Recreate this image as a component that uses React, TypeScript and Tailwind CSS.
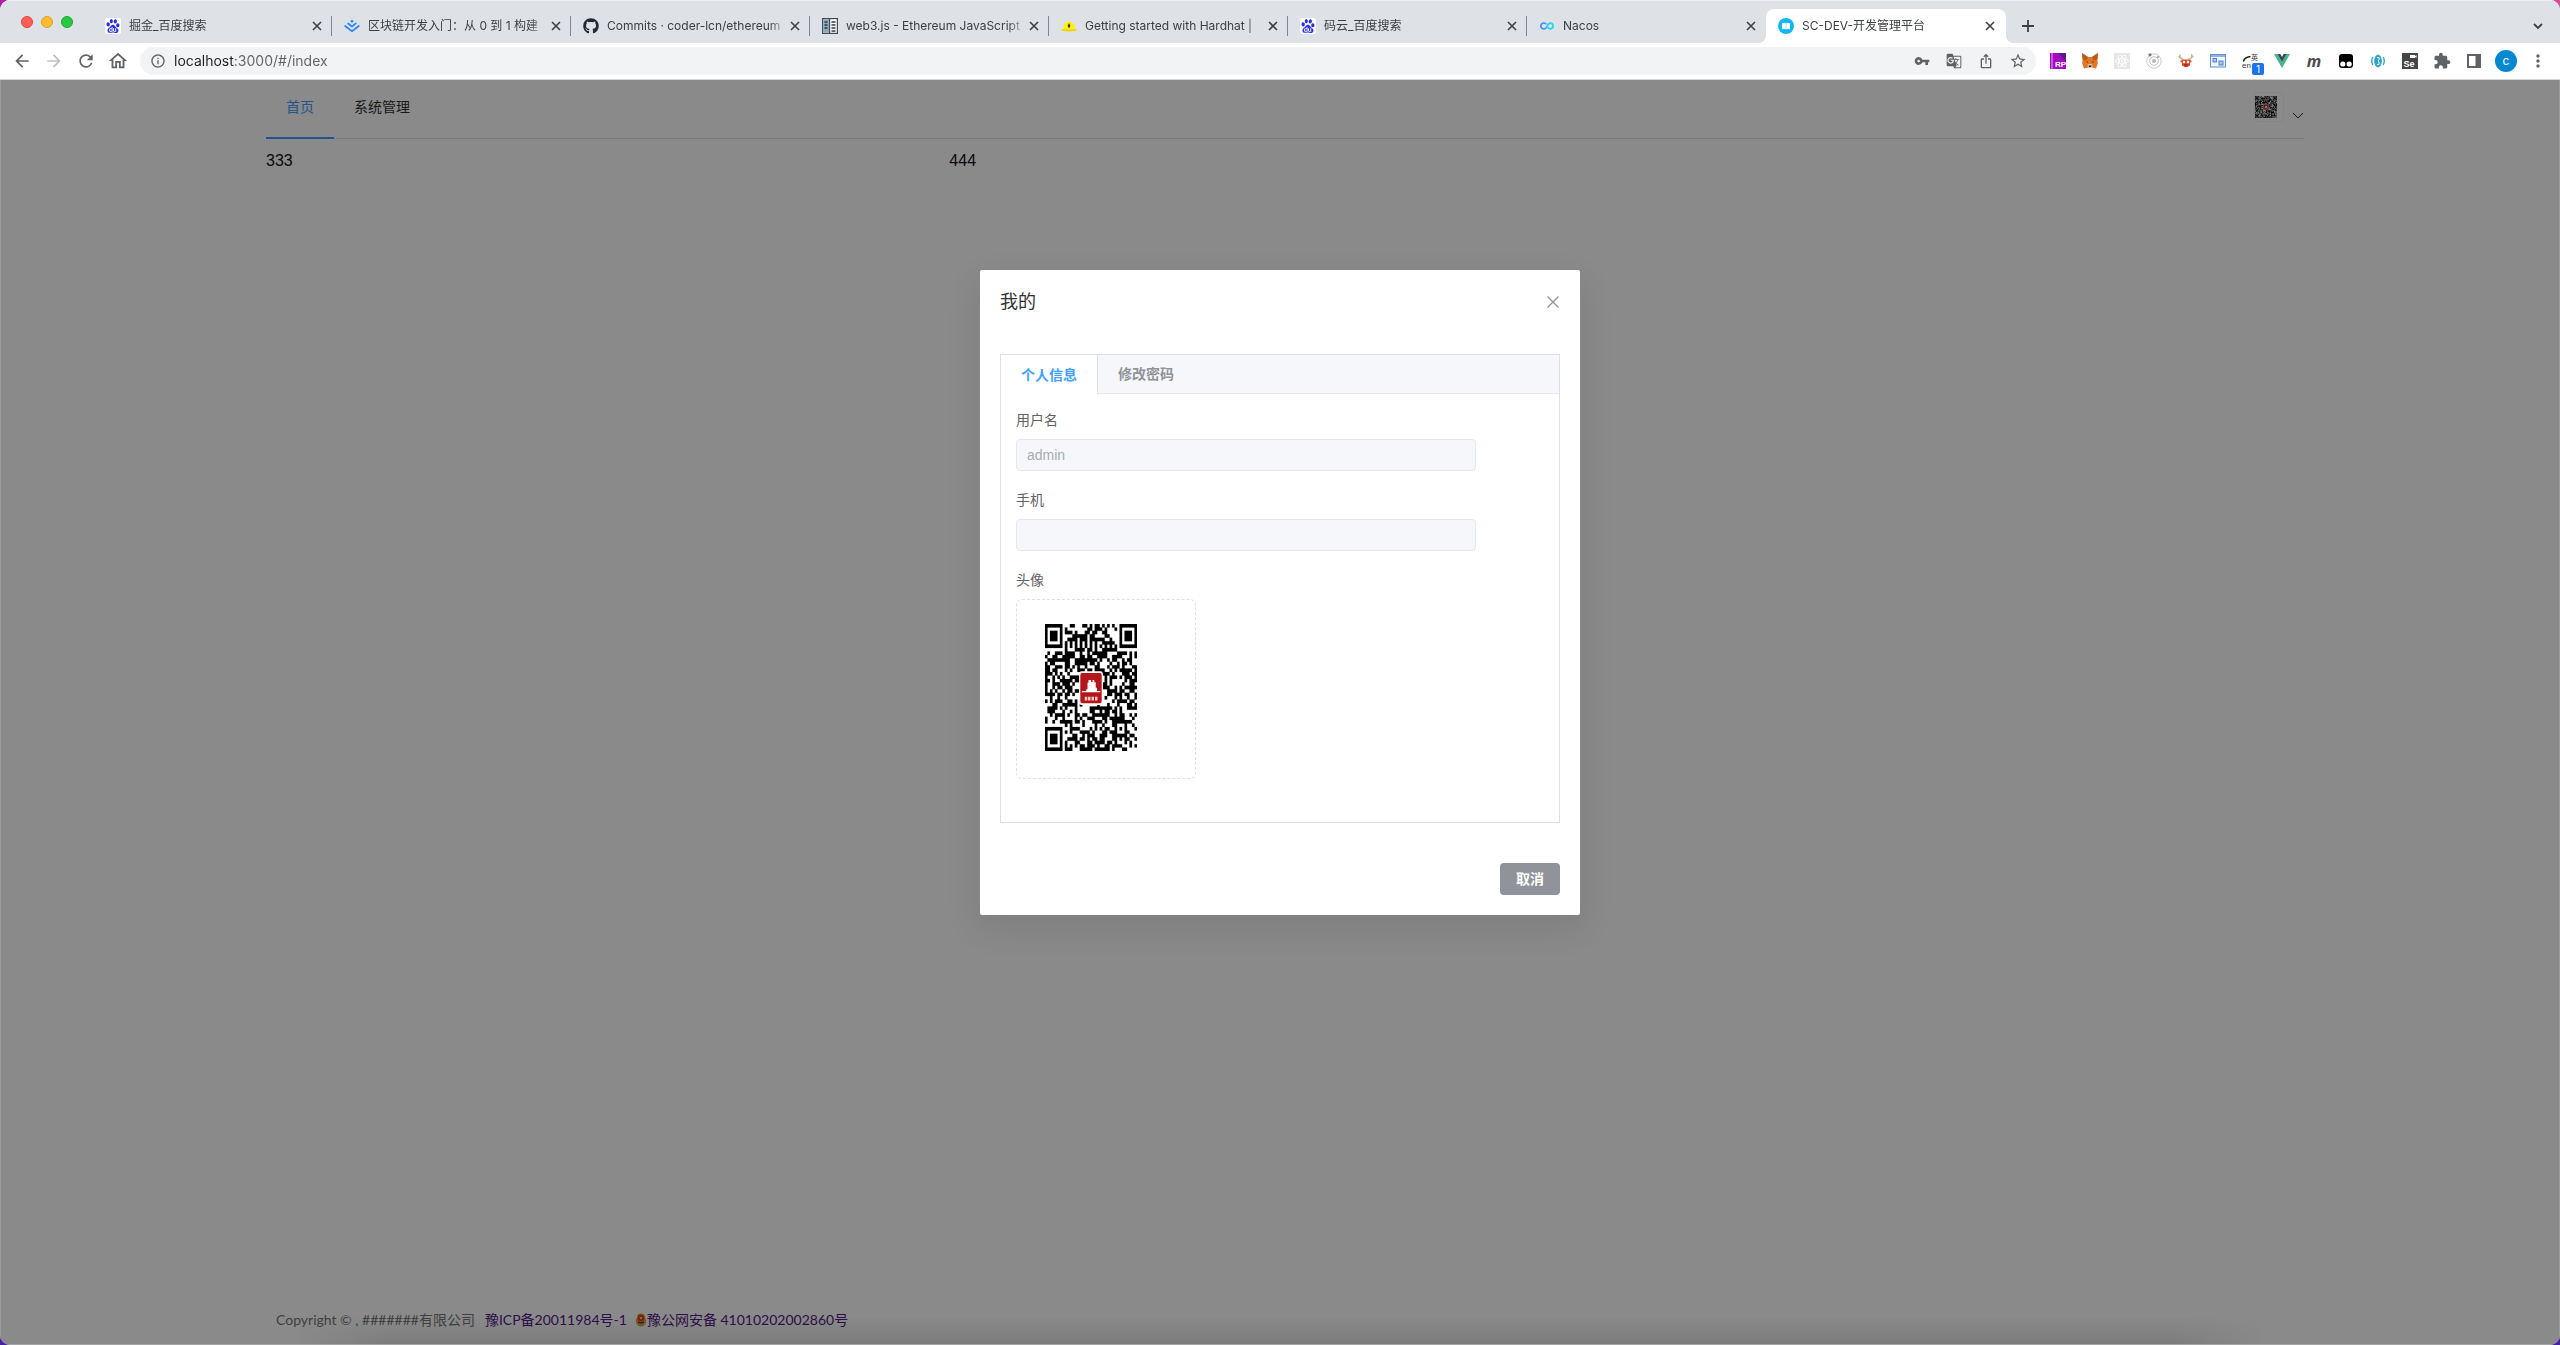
import React from "react";
import { FaGithub } from "react-icons/fa";
import { SiBaidu, SiJuejin } from "react-icons/si";
import {
  MdArrowBack,
  MdArrowForward,
  MdExtension,
  MdGTranslate,
  MdInfoOutline,
  MdIosShare,
  MdMoreVert,
  MdOutlineHome,
  MdRefresh,
  MdStarBorder,
  MdVpnKey,
} from "react-icons/md";

type IconNode = React.ReactNode;

/* ---------- QR avatar ---------- */

const QR_SIZE = 37;

function isFinder(x: number, y: number, ox: number, oy: number, size: number): boolean | null {
  const dx = x - ox;
  const dy = y - oy;
  if (dx < -1 || dy < -1 || dx > size || dy > size) return null;
  const c = (size - 1) / 2;
  const ring = Math.max(Math.abs(dx - c), Math.abs(dy - c));
  if (ring > c) return false;
  return ring === c || ring <= c - 2;
}

function qrPath(): string {
  let seed = 20011984;
  let d = "";
  for (let y = 0; y < QR_SIZE; y++) {
    for (let x = 0; x < QR_SIZE; x++) {
      seed = (seed * 1103515245 + 12345) % 2147483648;
      let on = (seed >> 12) % 100 < 52;
      const eye =
        isFinder(x, y, 0, 0, 7) ?? isFinder(x, y, QR_SIZE - 7, 0, 7) ?? isFinder(x, y, 0, QR_SIZE - 7, 7);
      if (eye !== null) on = eye;
      else if (x >= 28 && x <= 32 && y >= 28 && y <= 32) {
        const r = Math.max(Math.abs(x - 30), Math.abs(y - 30));
        on = r !== 1;
      } else if (x === 6 || y === 6) on = (x + y) % 2 === 0;
      if (on) d += `M${x} ${y}h1v1h-1z`;
    }
  }
  return d;
}

const QR_D = qrPath();

function QrCode({ className }: { className: string }) {
  return (
    <svg className={className} viewBox="0 0 37 37" preserveAspectRatio="none" role="img" aria-label="头像">
      <path d={QR_D} fill="#000" stroke="#000" strokeWidth=".06" />
      <rect x="13.7" y="13.8" width="9.6" height="9.8" rx="1" fill="#fff" />
      <rect x="14.2" y="14.3" width="8.6" height="8.8" rx=".7" fill="#b3171b" />
      <path d="M14.8 19.9h7.4v-.4h-1.3v-.9h-.5v-1.6h-.6v-.7h-.7v.6h-.6v-.6h-1v.8h-.4v1.9h-.5v.5h-1.8z" fill="#fff" />
      <path d="M16 21.2h1v1.1h-1zM17.3 21.2h1v1.1h-1zM18.7 21.2h1v1.1h-1zM20.1 21.2h1v1.1h-1z" fill="#f0c9c9" />
    </svg>
  );
}

/* ---------- small glyphs ---------- */

function Cross({ size = 16, weight = 1.6 }: { size?: number; weight?: number }) {
  return (
    <svg width={size} height={size} viewBox="0 0 16 16" fill="none" stroke="currentColor" strokeWidth={weight}>
      <path d="M4 4l8 8M12 4l-8 8" />
    </svg>
  );
}

function Baidu() {
  return (
    <span className="flex size-4 items-center justify-center rounded-xs bg-white text-[#2a2fe0]">
      <SiBaidu size={14} />
    </span>
  );
}

function Web3Book() {
  return (
    <svg width="16" height="16" viewBox="0 0 16 16">
      <rect x=".6" y=".6" width="14.8" height="14.8" fill="#fff" stroke="#3b4a54" strokeWidth="1.2" />
      <rect x="1.2" y="1.2" width="6" height="13.6" fill="#8fa9b8" />
      <path d="M7.6 0v16" stroke="#3b4a54" strokeWidth="1.2" />
      <path d="M2.5 4h3M2.5 7h3M2.5 10h3M9.5 4h4M9.5 7h4M9.5 10h4M9.5 13h4" stroke="#2b3a44" strokeWidth="1.4" />
    </svg>
  );
}

function Hardhat() {
  return (
    <svg width="16" height="16" viewBox="0 0 16 16">
      <path d="M2 11a6 7.5 0 0 1 12 0z" fill="#fff100" />
      <path d="M.5 11.2h15v1.6q-7.5 1.6-15 0z" fill="#f0d500" />
      <path d="M8 5l1.4 2.7L8 10.4 6.600 7.700z" fill="#333" />
    </svg>
  );
}

function Infinity2() {
  return (
    <svg width="16" height="16" viewBox="0 0 16 16" fill="none" strokeWidth="1.700">
      <path d="M7.200 6.200A3 3 0 1 0 7.200 9.800" stroke="#3f8cff" />
      <path d="M7.200 9.800C8.200 8.500 8.500 5.200 11.500 5.200a2.800 2.800 0 1 1-2.700 4" stroke="#22d3ee" />
    </svg>
  );
}

function SiteBadge() {
  return (
    <svg width="16" height="16" viewBox="0 0 16 16">
      <circle cx="8" cy="8" r="8" fill="#12b5f5" />
      <path d="M4 5.200q2-1 4 0 2-1 4 0v6q-2-.6-4 0-2-.6-4 0z" fill="#fff" />
      <path d="M8 5.200v6" stroke="#8bdcfa" strokeWidth=".7" />
    </svg>
  );
}

/* ---------- extension icons ---------- */

function AxureRp() {
  return (
    <svg width="16" height="16" viewBox="0 0 16 16">
      <rect width="16" height="16" fill="#a30dbf" />
      <path d="M8 0h8v9z" fill="#5a1a8c" />
      <rect x="1.500" width="1" height="16" fill="#f3a6ff" />
      <text x="5" y="14" fontSize="8" fontWeight="700" fill="#fff" fontFamily="Liberation Sans, sans-serif">RP</text>
    </svg>
  );
}

function Fox() {
  return (
    <svg width="16" height="16" viewBox="0 0 16 16">
      <path d="M0 0l6 4h4l6-4-.6 6.500.4 4L14 15.500l-4-1H6l-4 1L.2 10.500l.4-4z" fill="#e27625" />
      <path d="M0 0l6 4-1.500 3.500L.6 6.500zM16 0l-6 4 1.500 3.500 3.900-1z" fill="#b85c1c" />
      <path d="M5.500 12l1-1h3l1 1-.5 2.500H6z" fill="#d7c1b3" />
      <path d="M6.500 12.500h3L9 14H7z" fill="#2a2020" />
      <path d="M4.300 8.200l2 .8-1.500.7zM11.700 8.200l-2 .8 1.500.7z" fill="#233447" />
    </svg>
  );
}

function ReactOff() {
  return (
    <svg width="16" height="16" viewBox="0 0 16 16">
      <rect width="16" height="16" fill="#e6e6e6" />
      <g fill="none" stroke="#fff" strokeWidth=".9">
        <ellipse cx="8" cy="8" rx="6.500" ry="2.500" />
        <ellipse cx="8" cy="8" rx="6.500" ry="2.500" transform="rotate(60 8 8)" />
        <ellipse cx="8" cy="8" rx="6.500" ry="2.500" transform="rotate(120 8 8)" />
      </g>
      <circle cx="8" cy="8" r="1.200" fill="#fff" />
    </svg>
  );
}

function Orbit() {
  return (
    <svg width="16" height="16" viewBox="0 0 16 16" fill="none">
      <circle cx="8" cy="8" r="7.200" stroke="#c9c9c9" />
      <circle cx="8" cy="8" r="4.300" stroke="#bdbdbd" />
      <circle cx="8" cy="8" r="2" fill="#b5b5b5" />
      <circle cx="4" cy="1.800" r="1.600" fill="#777" />
      <circle cx="12" cy="4" r="1" fill="#999" />
    </svg>
  );
}

function Deer() {
  return (
    <svg width="16" height="16" viewBox="0 0 16 16" fill="none">
      <path
        d="M5.500 6.500Q1 5.500 2 1.500M3 5L.5 3.500M10.500 6.500Q15 5 13.500 1M13 5l2.500-2"
        stroke="#c4b48c"
        strokeWidth="1.500"
      />
      <path d="M2 8l3-1.500h6L14 8l-2 2v2.500L9.500 14h-3L4 12.500V10z" fill="#dd4b25" />
      <circle cx="6" cy="9" r="1.200" fill="#fff" />
      <circle cx="10" cy="9" r="1.200" fill="#fff" />
      <path d="M6 12h4" stroke="#7d1f10" />
    </svg>
  );
}

function WindowGears() {
  return (
    <svg width="16" height="16" viewBox="0 0 16 16" fill="none">
      <rect x=".5" y="1.500" width="15" height="12.500" fill="#eef5fd" stroke="#5c8fce" />
      <path d="M1 3h14" stroke="#8db4e4" strokeWidth="2" />
      <rect x="3" y="5.500" width="3.500" height="3.500" fill="#a8c8ee" stroke="#4f83c4" />
      <rect x="9" y="8" width="4" height="4" fill="#a8c8ee" stroke="#4f83c4" />
    </svg>
  );
}

function TranslateExt() {
  return (
    <span className="relative block size-4">
      <svg width="16" height="16" viewBox="0 0 16 16" fill="none">
        <path d="M1.500 8.500Q2 4.500 8.500 3.500" stroke="#111" strokeWidth="1.500" />
        <text x="0" y="15" fontSize="8" fill="#333" fontFamily="Liberation Sans, sans-serif">en</text>
        <text x="9" y="6.500" fontSize="7" fill="#333" fontFamily="Noto Sans CJK SC, sans-serif">英</text>
      </svg>
      <span className="absolute top-2.5 left-2.5 flex h-3 w-3 items-center justify-center rounded-xs bg-[#1a73e8] text-[10px] leading-3 text-white">
        1
      </span>
    </span>
  );
}

function Vue() {
  return (
    <svg width="16" height="16" viewBox="0 0 16 16">
      <path d="M0 1h3.400L8 9l4.600-8H16L8 15z" fill="#41b883" />
      <path d="M3.400 1h3L8 4l1.600-3h3L8 9z" fill="#35495e" />
    </svg>
  );
}

function Tamper() {
  return (
    <svg width="16" height="16" viewBox="0 0 16 16">
      <rect x="1" y="1" width="14" height="14" rx="3" fill="#000" />
      <circle cx="4.800" cy="11" r="2.600" fill="#fff" />
      <circle cx="11.200" cy="11" r="2.600" fill="#fff" />
    </svg>
  );
}

function Braces() {
  return (
    <svg width="16" height="16" viewBox="0 0 16 16" fill="none" stroke="#2fa3c7">
      <ellipse cx="8" cy="8" rx="3.300" ry="6" fill="#2fa3c7" />
      <path d="M2.800 4Q.6 8 2.800 12M13.200 4q2.200 4 0 8" strokeWidth="1.300" />
      <path d="M7 4.500h2v2.500l-1 1 1 1v2.500H7" stroke="#fff" strokeWidth="1" />
    </svg>
  );
}

function Selenium() {
  return (
    <svg width="16" height="16" viewBox="0 0 16 16">
      <rect width="16" height="16" fill="#454545" />
      <path d="M8 2h5v1l1.500-1v3L13 4v1H8z" fill="#fff" />
      <text x="1.500" y="14" fontSize="9" fontWeight="700" fill="#fff" fontFamily="Liberation Sans, sans-serif">Se</text>
    </svg>
  );
}

function SidePanel() {
  return (
    <svg width="16" height="16" viewBox="0 0 16 16">
      <path d="M1 1h14v14H1zM3 3v10h6.500V3z" fill="#5f6368" fillRule="evenodd" />
    </svg>
  );
}

function Police() {
  return (
    <svg width="12" height="14" viewBox="0 0 14 16" aria-hidden="true">
      <path d="M7 .5q5 0 4.500 4.500Q14 8 12.500 12 11 15.500 7 15.500T1.500 12Q0 8 2.500 5 2 .5 7 .5z" fill="#e0a43a" />
      <circle cx="7" cy="5.800" r="3.800" fill="#d93a1c" />
      <path d="M7 3.500l.7 1.300 1.400.2-1 1 .2 1.400L7 6.800l-1.300.6.200-1.400-1-1 1.400-.2z" fill="#f8d24a" />
      <path d="M3.500 9.500q3.500 2 7 0v1.500q-3.500 2-7 0z" fill="#27306b" />
    </svg>
  );
}

/* ---------- browser chrome ---------- */

interface BrowserTab {
  title: string;
  icon: IconNode;
}

const tabs: BrowserTab[] = [
  { title: "掘金_百度搜索", icon: <Baidu /> },
  { title: "区块链开发入门：从 0 到 1 构建", icon: <SiJuejin size={16} color="#1e80ff" /> },
  { title: "Commits · coder-lcn/ethereum", icon: <FaGithub size={16} color="#24292f" /> },
  { title: "web3.js - Ethereum JavaScript", icon: <Web3Book /> },
  { title: "Getting started with Hardhat |", icon: <Hardhat /> },
  { title: "码云_百度搜索", icon: <Baidu /> },
  { title: "Nacos", icon: <Infinity2 /> },
  { title: "SC-DEV-开发管理平台", icon: <SiteBadge /> },
];

function TabStrip() {
  const last = tabs.length - 1;
  return (
    <header className="flex h-[43px] items-end border-t border-[#eceef0] bg-[#dee1e6]">
      <div className="flex h-[42px] w-[93px] shrink-0 items-center gap-2 pl-[21px]">
        <button aria-label="关闭窗口" className="size-3 rounded-full border border-[#e0443e] bg-[#ff5f57]" />
        <button aria-label="最小化" className="size-3 rounded-full border border-[#dea123] bg-[#febc2e]" />
        <button aria-label="全屏" className="size-3 rounded-full border border-[#1aab29] bg-[#28c840]" />
      </div>
      {tabs.map((tab, i) => {
        const active = i === last;
        return (
          <div
            key={i}
            className={
              active
                ? "relative flex h-[34px] max-w-[240px] min-w-0 flex-1 items-center rounded-t-lg bg-white pr-0.5 pl-3"
                : "flex h-[34px] max-w-[239px] min-w-0 flex-1 items-center pl-3"
            }
          >
            {active && (
              <>
                <span className="absolute bottom-0 -left-2 size-2 bg-[radial-gradient(circle_at_top_left,#dee1e6_8px,#fff_8px)]" />
                <span className="absolute -right-2 bottom-0 size-2 bg-[radial-gradient(circle_at_top_right,#dee1e6_8px,#fff_8px)]" />
              </>
            )}
            <span className="flex size-4 shrink-0 items-center justify-center">{tab.icon}</span>
            <span className="ml-2 min-w-0 flex-1 overflow-hidden mask-r-from-90% text-xs whitespace-nowrap text-[#3c4043]">
              {tab.title}
            </span>
            <button aria-label={`关闭 ${tab.title}`} className="mr-1.5 shrink-0 text-[#3c4043]">
              <Cross />
            </button>
            {i < last && <span className={i === last - 1 ? "w-px" : "h-5 w-px bg-[#80868b]"} />}
          </div>
        );
      })}
      <button aria-label="新标签页" className="flex h-[34px] w-11 items-center justify-center text-[#3c4043]">
        <svg width="14" height="14" viewBox="0 0 14 14" stroke="currentColor" strokeWidth="1.800">
          <path d="M7 1v12M1 7h12" />
        </svg>
      </button>
      <button aria-label="搜索标签页" className="ml-auto flex h-[34px] w-11 items-center justify-center text-[#3c4043]">
        <svg width="12" height="12" viewBox="0 0 12 12" fill="none" stroke="currentColor" strokeWidth="1.800">
          <path d="M2 4l4 4 4-4" />
        </svg>
      </button>
    </header>
  );
}

function ToolButton({ label, children }: { label: string; children: IconNode }) {
  return (
    <button aria-label={label} className="flex size-8 shrink-0 items-center justify-center text-[#5f6368]">
      {children}
    </button>
  );
}

const extensions: { label: string; icon: IconNode }[] = [
  { label: "Axure RP", icon: <AxureRp /> },
  { label: "MetaMask", icon: <Fox /> },
  { label: "React", icon: <ReactOff /> },
  { label: "Orbit", icon: <Orbit /> },
  { label: "Deer", icon: <Deer /> },
  { label: "窗口", icon: <WindowGears /> },
  { label: "翻译", icon: <TranslateExt /> },
  { label: "Vue", icon: <Vue /> },
  {
    label: "m",
    icon: <span className="font-['Open_Sans',sans-serif] text-base leading-4 font-bold text-[#4a4a4a] italic">m</span>,
  },
  { label: "Tampermonkey", icon: <Tamper /> },
  { label: "JSON", icon: <Braces /> },
  { label: "Selenium", icon: <Selenium /> },
  { label: "扩展程序", icon: <MdExtension size={18} /> },
  { label: "侧边栏", icon: <SidePanel /> },
];

function Toolbar() {
  return (
    <div className="flex h-[37px] items-center border-b border-[#d3d5d8] bg-white px-1.5">
      <ToolButton label="后退"><MdArrowBack size={20} /></ToolButton>
      <ToolButton label="前进"><MdArrowForward size={20} className="text-[#bdc1c6]" /></ToolButton>
      <ToolButton label="刷新"><MdRefresh size={20} /></ToolButton>
      <ToolButton label="主页"><MdOutlineHome size={22} /></ToolButton>
      <div className="mx-1.5 flex h-7 flex-1 items-center rounded-full bg-[#f1f3f4] pr-0.5 pl-2.5 text-[#5f6368]">
        <MdInfoOutline size={16} className="mr-2 shrink-0" />
        <input
          aria-label="地址"
          defaultValue="localhost:3000/#/index"
          className="min-w-0 flex-1 bg-[linear-gradient(90deg,#202124_61px,#5f6368_61px)] bg-clip-text text-sm text-transparent outline-none"
        />
        <ToolButton label="密码"><MdVpnKey size={16} /></ToolButton>
        <ToolButton label="翻译此页"><MdGTranslate size={16} /></ToolButton>
        <ToolButton label="分享"><MdIosShare size={16} /></ToolButton>
        <ToolButton label="收藏"><MdStarBorder size={18} /></ToolButton>
      </div>
      {extensions.map((e) => (
        <ToolButton key={e.label} label={e.label}>{e.icon}</ToolButton>
      ))}
      <ToolButton label="账户">
        <span className="flex size-[22px] items-center justify-center rounded-full bg-[#0288d1] text-xs text-white">c</span>
      </ToolButton>
      <ToolButton label="菜单"><MdMoreVert size={20} /></ToolButton>
    </div>
  );
}

/* ---------- dialog ---------- */

function ProfileDialog() {
  return (
    <section
      role="dialog"
      aria-labelledby="dialog-title"
      className="mt-[190px] w-full max-w-[600px] rounded-xs bg-white px-5 pt-4 pb-5 text-sm text-[#606266] shadow-[0_12px_32px_4px_rgba(0,0,0,0.08)]"
    >
      <div className="flex h-8 items-center justify-between">
        <h2 id="dialog-title" className="text-lg leading-6 text-[#303133]">我的</h2>
        <button aria-label="关闭" className="-mr-1 text-[#909399]">
          <Cross size={22} weight={0.9} />
        </button>
      </div>
      <div className="mt-9 border border-[#dcdfe6]">
        <div role="tablist" className="flex h-[39px] border-b border-[#e4e7ed] bg-[#f5f7fa] font-bold">
          <button role="tab" aria-selected="true" className="-mb-px border-r border-[#dcdfe6] bg-white px-5 text-[#409eff]">
            个人信息
          </button>
          <button role="tab" aria-selected="false" className="px-5 text-[#909399]">修改密码</button>
        </div>
        <form className="px-[15px] pt-[15px] pb-[43px]">
          <label htmlFor="username" className="mb-2 block leading-[22px]">用户名</label>
          <input
            id="username"
            disabled
            value="admin"
            className="mb-[18px] block h-8 w-[460px] max-w-full rounded-sm border border-[#e4e7ed] bg-[#f5f7fa] px-2.5 font-['Liberation_Sans',sans-serif] text-[#a8abb2]"
          />
          <label htmlFor="phone" className="mb-2 block leading-[22px]">手机</label>
          <input
            id="phone"
            disabled
            value=""
            className="mb-[18px] block h-8 w-[460px] max-w-full rounded-sm border border-[#e4e7ed] bg-[#f5f7fa] px-2.5"
          />
          <p className="mb-2 leading-[22px]">头像</p>
          <button
            type="button"
            aria-label="上传头像"
            className="flex size-[180px] items-start rounded-md border border-dashed border-[#dcdfe6] pt-6 pl-7"
          >
            <QrCode className="h-[127px] w-[92px]" />
          </button>
        </form>
      </div>
      <div className="mt-10 flex justify-end">
        <button className="h-8 rounded-sm bg-[#909399] px-4 font-bold text-white">取消</button>
      </div>
    </section>
  );
}

/* ---------- page ---------- */

export default function App() {
  return (
    <div className="bg-[linear-gradient(90deg,#b01fa8_50%,#d0509a_50%)] font-['Inter','Noto_Sans_CJK_SC',sans-serif]">
      <div className="bg-[linear-gradient(0deg,#4a1fa8_20px,transparent_20px)]">
        <div className="flex min-h-screen flex-col overflow-hidden rounded-[10px] bg-white">
          <TabStrip />
          <Toolbar />
          <div className="relative flex flex-1 flex-col">
            <div className="flex flex-1 flex-col pr-64 pl-[266px]">
              <nav className="flex h-[59px] border-b border-[#dcdfe6] text-sm text-[#303133]">
                <a href="#/index" className="-mb-px border-b-2 border-[#409eff] px-5 pt-[17px] text-[#409eff]">首页</a>
                <a href="#/system" className="px-5 pt-[17px]">系统管理</a>
                <button aria-label="用户菜单" className="ml-auto flex items-start gap-2 pt-3">
                  <span className="block size-[30px] rounded-sm border border-[#f6f6f6] pt-[3px]">
                    <QrCode className="size-[22px]" />
                  </span>
                  <svg className="mt-[18px]" width="12" height="12" viewBox="0 0 12 12" fill="none" stroke="#303133">
                    <path d="M1 3l5 5 5-5" />
                  </svg>
                </button>
              </nav>
              <main className="grid grid-cols-3 gap-3 pt-2.5 font-['Liberation_Sans',sans-serif] text-base leading-6 text-[#111]">
                <div>333</div>
                <div>444</div>
              </main>
              <footer className="mt-auto flex h-[50px] items-center gap-2.5 pl-2.5 font-['Lato','Noto_Sans_CJK_SC',sans-serif] text-sm text-[#777] [&_a]:text-[#551a8b]">
                <span>Copyright © , #######有限公司</span>
                <a href="#icp">豫ICP备20011984号-1</a>
                <a href="#police" className="-ml-0.5 flex items-center">
                  <Police />
                  豫公网安备 41010202002860号
                </a>
              </footer>
            </div>
            <div className="absolute inset-0 flex items-start justify-center border-x border-[#9b9b9b] bg-black/46">
              <ProfileDialog />
            </div>
            <div className="pointer-events-none absolute inset-x-0 bottom-0 flex h-7 justify-center border-b border-[#a5a5a5]">
              <div className="w-[77%] bg-linear-to-t from-black/10 to-transparent mask-x-from-95%" />
            </div>
          </div>
        </div>
      </div>
    </div>
  );
}
